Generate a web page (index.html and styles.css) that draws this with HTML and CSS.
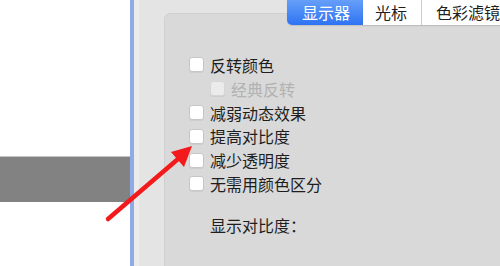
FILE: index.html
```html
<!DOCTYPE html>
<html lang="zh-CN">
<head>
    <meta charset="UTF-8">
    <meta name="viewport" content="width=device-width, initial-scale=1.0">
    <title>辅助功能 - 显示器</title>
    <link rel="stylesheet" href="styles.css">
</head>
<body>
<div class="window">
    <div class="sidebar">
        <div class="sidebar-item"></div>
    </div>

    <div class="pane">
        <div class="tabs">
            <div class="tab active">显示器</div>
            <div class="tab">光标</div>
            <div class="tab">色彩滤镜</div>
        </div>

        <div class="box">
            <label class="option"><span class="check"></span>反转颜色</label>
            <label class="option sub disabled"><span class="check"></span>经典反转</label>
            <label class="option"><span class="check"></span>减弱动态效果</label>
            <label class="option"><span class="check"></span>提高对比度</label>
            <label class="option"><span class="check"></span>减少透明度</label>
            <label class="option"><span class="check"></span>无需用颜色区分</label>

            <div class="contrast">显示对比度：</div>
        </div>
    </div>

    <!-- annotation arrow -->
    <svg class="arrow" width="500" height="266" viewBox="0 0 500 266">
        <line x1="108" y1="219" x2="178" y2="159" stroke="#f21a1a" stroke-width="4.5" stroke-linecap="round"/>
        <polygon points="192,146 171,152 184,167" fill="#f21a1a"/>
    </svg>
</div>
</body>
</html>
```

FILE: styles.css
```css
* {
	box-sizing: border-box;
}

html, body {
	margin: 0;
	padding: 0;
}

body {
	background-color: #fff;
	font-family: "Noto Sans CJK SC", "Noto Sans", sans-serif;
	color: #1e1e1e;
}

.window {
	position: relative;
	display: flex;
	width: 500px;
	height: 266px;
	overflow: hidden;
}

/* left list, mostly off screen */
.sidebar {
	flex: 0 0 134px;
	background: #fff;
	border-right: 4px solid #8eabe6;
	padding-top: 156px;
}

.sidebar-item {
	height: 46px;
	background: #828282;
	border-top: 1px solid #c4c4c4;
}

.pane {
	flex: 1 1 auto;
	display: flex;
	flex-direction: column;
	background: #e4e4e4;
	border-left: 5px solid #ebebeb;
	padding-left: 25px;
	min-width: 0;
}

.tabs {
	position: relative;
	z-index: 1;
	display: flex;
	height: 29px;
	margin-top: -4px;
	margin-left: 123px;
	font-size: 16px;
	white-space: nowrap;
}

.tab {
	flex: 0 0 auto;
	display: flex;
	align-items: center;
	padding: 3px 0 0 15px;
	background: #fff;
	border-right: 1px solid #d2d2d2;
	box-shadow: 0 1px 1px rgba(0, 0, 0, .12);
}

.tab:nth-child(1) {
	width: 76px;
	border-radius: 0 0 0 5px;
}

.tab:nth-child(2) {
	width: 59px;
	padding-left: 12px;
}

.tab:nth-child(3) {
	width: 100px;
	padding-left: 14px;
}

.tab.active {
	color: #fff;
	background: linear-gradient(#6ea6fa, #2f73f3);
	border-right: 0;
}

.box {
	flex: 1 1 auto;
	margin-top: -12px;
	margin-right: -10px;
	margin-bottom: -10px;
	background: #d9d9d9;
	border: 1px solid #d0d0d0;
	border-radius: 6px;
	padding: 39px 0 0 24px;
}

.option {
	display: flex;
	align-items: center;
	height: 23.8px;
	font-size: 16px;
}

.check {
	flex: 0 0 15px;
	height: 15px;
	margin-right: 6px;
	background: #fff;
	border: 1px solid #c6c6c6;
	border-radius: 3px;
	box-shadow: 0 1px 0 rgba(0, 0, 0, .05);
}

.option.sub {
	padding-left: 21px;
}

.option.disabled {
	color: #b2b2b2;
}

.option.disabled .check {
	background: #ebebeb;
	border-color: #d6d6d6;
}

.contrast {
	margin-top: 17px;
	padding-left: 21px;
	font-size: 16px;
	line-height: 24px;
}

.arrow {
	position: absolute;
	left: 0;
	top: 0;
}
```
